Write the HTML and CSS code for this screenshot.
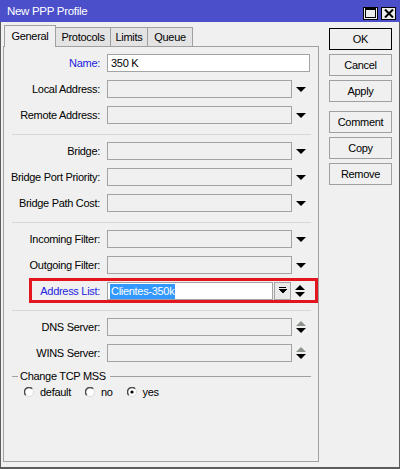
FILE: index.html
```html
<!DOCTYPE html>
<html>
<head>
<meta charset="utf-8">
<link rel="stylesheet" href="styles.css">
</head>
<body>
<div class="win">
  <div class="titlebar">
    <span class="title">New PPP Profile</span>
    <div class="wbtns">
      <span class="wbtn"><svg width="11" height="10" viewBox="0 0 11 10" shape-rendering="crispEdges"><rect x="0.5" y="0.5" width="10" height="9" fill="none" stroke="#000"/><rect x="0" y="0" width="11" height="2" fill="#000"/></svg></span>
      <span class="wbtn"><svg width="10" height="9" viewBox="0 0 10 9"><path d="M1 0.5 L9 8.5 M9 0.5 L1 8.5" stroke="#000" stroke-width="2"/></svg></span>
    </div>
  </div>
  <div class="main">
    <div class="left">
      <div class="tabs">
        <div class="tab active t-general">General</div>
        <div class="tab t-protocols">Protocols</div>
        <div class="tab t-limits">Limits</div>
        <div class="tab t-queue">Queue</div>
      </div>
      <div class="panel">
        <div class="section">
          <div class="row"><span class="lbl blue">Name:</span><div class="inp white name">350 K</div></div>
          <div class="row"><span class="lbl">Local Address:</span><div class="inp"></div><span class="icon"><svg class="drop" width="10" height="5" viewBox="0 0 10 5"><polygon points="0,0 10,0 5,5" fill="#000"/></svg></span></div>
          <div class="row"><span class="lbl">Remote Address:</span><div class="inp"></div><span class="icon"><svg class="drop" width="10" height="5" viewBox="0 0 10 5"><polygon points="0,0 10,0 5,5" fill="#000"/></svg></span></div>
        </div>
        <div class="sep"></div>
        <div class="section">
          <div class="row"><span class="lbl">Bridge:</span><div class="inp"></div><span class="icon"><svg class="drop" width="10" height="5" viewBox="0 0 10 5"><polygon points="0,0 10,0 5,5" fill="#000"/></svg></span></div>
          <div class="row"><span class="lbl">Bridge Port Priority:</span><div class="inp"></div><span class="icon"><svg class="drop" width="10" height="5" viewBox="0 0 10 5"><polygon points="0,0 10,0 5,5" fill="#000"/></svg></span></div>
          <div class="row"><span class="lbl">Bridge Path Cost:</span><div class="inp"></div><span class="icon"><svg class="drop" width="10" height="5" viewBox="0 0 10 5"><polygon points="0,0 10,0 5,5" fill="#000"/></svg></span></div>
        </div>
        <div class="sep"></div>
        <div class="section">
          <div class="row"><span class="lbl">Incoming Filter:</span><div class="inp"></div><span class="icon"><svg class="drop" width="10" height="5" viewBox="0 0 10 5"><polygon points="0,0 10,0 5,5" fill="#000"/></svg></span></div>
          <div class="row"><span class="lbl">Outgoing Filter:</span><div class="inp"></div><span class="icon"><svg class="drop" width="10" height="5" viewBox="0 0 10 5"><polygon points="0,0 10,0 5,5" fill="#000"/></svg></span></div>
          <div class="row marked"><span class="lbl blue">Address List:</span><div class="inp white addr"><span class="sel">Clientes-350k</span></div><span class="mini"><svg width="9" height="8" viewBox="0 0 9 8" shape-rendering="crispEdges"><rect x="1" y="0" width="7" height="1" fill="#000"/><polygon points="0,2 9,2 4.5,6.5" fill="#000"/></svg></span><span class="icon"><svg width="10" height="12" viewBox="0 0 10 12"><polygon points="5,0 10,5 0,5" fill="#000"/><polygon points="0,7 10,7 5,12" fill="#000"/></svg></span></div>
        </div>
        <div class="sep"></div>
        <div class="section">
          <div class="row"><span class="lbl">DNS Server:</span><div class="inp"></div><span class="icon"><svg width="10" height="12" viewBox="0 0 10 12"><polygon points="5,0 10,5 0,5" fill="#8e938e"/><polygon points="0,7 10,7 5,12" fill="#000"/></svg></span></div>
          <div class="row"><span class="lbl">WINS Server:</span><div class="inp"></div><span class="icon"><svg width="10" height="12" viewBox="0 0 10 12"><polygon points="5,0 10,5 0,5" fill="#8e938e"/><polygon points="0,7 10,7 5,12" fill="#000"/></svg></span></div>
        </div>
        <div class="group">
          <span class="gline short"></span><span class="gtitle">Change TCP MSS</span><span class="gline"></span>
        </div>
        <div class="radios">
          <span class="opt"><svg class="radio" width="10" height="10" viewBox="0 0 10 10"><circle cx="5" cy="5" r="4.5" fill="#fff"/><path d="M1.8 8.2 A4.5 4.5 0 0 1 8.2 1.8" fill="none" stroke="#4a4a4a" stroke-width="1.5"/><path d="M8.2 1.8 A4.5 4.5 0 0 1 1.8 8.2" fill="none" stroke="#dcdcdc" stroke-width="1"/></svg>default</span>
          <span class="opt"><svg class="radio" width="10" height="10" viewBox="0 0 10 10"><circle cx="5" cy="5" r="4.5" fill="#fff"/><path d="M1.8 8.2 A4.5 4.5 0 0 1 8.2 1.8" fill="none" stroke="#4a4a4a" stroke-width="1.5"/><path d="M8.2 1.8 A4.5 4.5 0 0 1 1.8 8.2" fill="none" stroke="#dcdcdc" stroke-width="1"/></svg>no</span>
          <span class="opt"><svg class="radio" width="10" height="10" viewBox="0 0 10 10"><circle cx="5" cy="5" r="4.5" fill="#fff"/><path d="M1.8 8.2 A4.5 4.5 0 0 1 8.2 1.8" fill="none" stroke="#4a4a4a" stroke-width="1.5"/><path d="M8.2 1.8 A4.5 4.5 0 0 1 1.8 8.2" fill="none" stroke="#dcdcdc" stroke-width="1"/><circle cx="5" cy="5" r="1.6" fill="#000"/></svg>yes</span>
        </div>
      </div>
    </div>
    <div class="btns">
      <div class="btn default">OK</div>
      <div class="btn">Cancel</div>
      <div class="btn">Apply</div>
      <div class="btn gap">Comment</div>
      <div class="btn">Copy</div>
      <div class="btn">Remove</div>
    </div>
  </div>
</div>
</body>
</html>
```

FILE: styles.css
```css
html, body {
  margin: 0;
  padding: 0;
}
body {
  width: 400px;
  height: 469px;
  background: #f0f0f0;
  font-family: "Liberation Sans", Arial, sans-serif;
  font-size: 11px;
  letter-spacing: -0.3px;
  color: #000;
  overflow: hidden;
}
.win {
  width: 400px;
  height: 469px;
  box-sizing: border-box;
  border: 1px solid #5c5c5c;
  border-top: none;
  border-bottom: 2px solid #5c5c5c;
  background: #f0f0f0;
}
.titlebar {
  height: 22px;
  margin: 0 -1px;
  background: #4b4fc9;
  display: flex;
  align-items: center;
  justify-content: space-between;
  padding: 0 4px 0 7px;
}
.title {
  color: #fff;
  font-size: 11.5px;
}
.wbtns {
  display: flex;
  gap: 3px;
  margin-top: 4px;
}
.wbtn {
  width: 15px;
  height: 13px;
  box-sizing: border-box;
  border: 1px solid #000;
  background: #ececec;
  display: flex;
  align-items: center;
  justify-content: center;
}
.main {
  display: flex;
  padding-top: 3px;
}
.left {
  margin-left: 2px;
  width: 316px;
}
.tabs {
  display: flex;
  align-items: flex-end;
  height: 21px;
  padding-left: 1px;
}
.tab {
  box-sizing: border-box;
  height: 19px;
  border: 1px solid #a0a0a0;
  border-bottom: none;
  background: #e3e3e3;
  display: flex;
  align-items: center;
  justify-content: center;
  margin-left: -1px;
}
.tab.active {
  height: 22px;
  margin-bottom: -1px;
  margin-left: 0;
  background: #f0f0f0;
  position: relative;
  z-index: 1;
  padding-bottom: 2px;
}
.t-general { width: 52px; }
.t-protocols { width: 56px; }
.t-limits { width: 38px; }
.t-queue { width: 46px; }
.panel {
  box-sizing: border-box;
  height: 416px;
  border: 1px solid #a0a0a0;
  padding-top: 7px;
}
.section {
  display: flex;
  flex-direction: column;
  gap: 8px;
}
.row {
  display: flex;
  align-items: center;
  height: 18px;
}
.lbl {
  width: 96px;
  margin-right: 7px;
  text-align: right;
  white-space: nowrap;
}
.lbl.blue {
  color: #2323e0;
}
.inp {
  box-sizing: border-box;
  height: 18px;
  width: 185px;
  border: 1px solid #a3a3a3;
  background: #f0f0f0;
  display: flex;
  align-items: center;
  padding-left: 3px;
}
.inp.white {
  background: #fff;
}
.inp.name {
  width: 203px;
}
.inp.addr {
  width: 166px;
  padding-left: 2px;
}
.sel {
  background: #3399ff;
  color: #fff;
  line-height: 15px;
  padding: 0 1px;
}
.mini {
  box-sizing: border-box;
  width: 17px;
  height: 18px;
  margin-left: 1px;
  border: 1px solid #a3a3a3;
  background: #e9e9e9;
  display: flex;
  align-items: center;
  justify-content: center;
}
.icon {
  width: 18px;
  height: 18px;
  display: flex;
  align-items: center;
  justify-content: center;
}
.marked {
  position: relative;
}
.marked::after {
  content: "";
  position: absolute;
  left: 25px;
  right: 0;
  top: -4px;
  bottom: -3px;
  border: 3px solid #e3161f;
  pointer-events: none;
}
.sep {
  height: 1px;
  background: #d7d7d7;
  margin: 10px 7px 7px 8px;
}
.group {
  display: flex;
  align-items: center;
  height: 12px;
  margin: 8px 7px 0 8px;
}
.gline {
  flex: 1;
  height: 1px;
  background: #a0a0a0;
}
.gline.short {
  flex: 0 0 6px;
}
.gtitle {
  padding: 0 4px 0 2px;
  white-space: nowrap;
}
.radios {
  display: flex;
  align-items: center;
  gap: 14px;
  height: 14px;
  margin: 3px 0 0 20px;
}
.opt {
  display: flex;
  align-items: center;
  gap: 6px;
}
.btns {
  margin-left: 10px;
  margin-top: 3px;
  display: flex;
  flex-direction: column;
  gap: 4px;
}
.btn {
  box-sizing: border-box;
  width: 63px;
  height: 22px;
  border: 1px solid #a0a0a0;
  background: #f0f0f0;
  display: flex;
  align-items: center;
  justify-content: center;
}
.btn.default {
  border-color: #000;
}
.btn.gap {
  margin-top: 5px;
}
```
